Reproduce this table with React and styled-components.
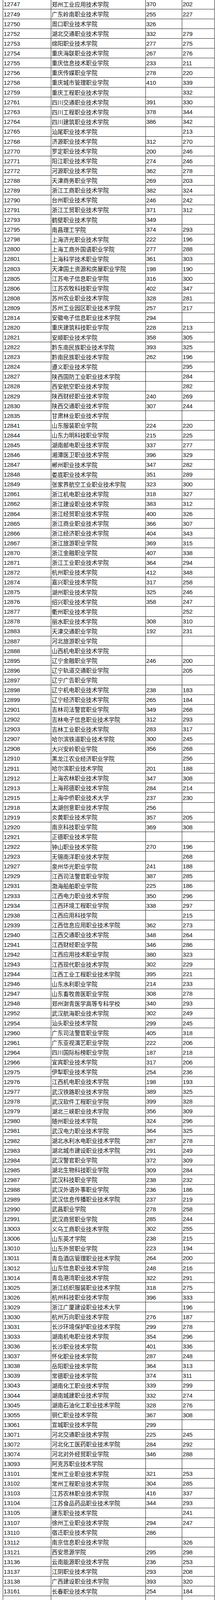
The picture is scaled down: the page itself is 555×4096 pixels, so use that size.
import styled, { createGlobalStyle } from "styled-components";

const GlobalStyle = createGlobalStyle`
  html, body {
    margin: 0;
    padding: 0;
    background: #fff;
  }
  body {
    font-family: "Liberation Sans", "Noto Sans CJK SC", sans-serif;
    color: #111;
  }
`;

// code | name | first score | second score  ('' = empty cell)
const rows = `
12747|郑州工业应用技术学院|370|202
12749|广东岭南职业技术学院|255|227
12750|周口职业技术学院|326|
12752|湖北交通职业技术学院|332|279
12753|绵阳职业技术学院|277|275
12754|重庆海联职业技术学院|267|276
12755|重庆信息技术职业学院|233|211
12756|重庆传媒职业学院|278|220
12758|重庆城市管理职业学院|410|339
12759|重庆工程职业技术学院||332
12761|四川交通职业技术学院|391|330
12763|四川工程职业技术学院|378|344
12764|四川建筑职业技术学院|386|342
12765|汕尾职业技术学院||213
12768|济源职业技术学院|312|270
12770|罗定职业技术学院|200|246
12771|阳江职业技术学院|274|246
12772|河源职业技术学院|362|278
12788|天津商务职业学院|269|203
12789|浙江工商职业技术学院|382|324
12790|台州职业技术学院|246|242
12791|浙江工贸职业技术学院|371|312
12793|鹤壁职业技术学院|349|
12795|南昌理工学院|374|293
12798|上海济光职业技术学院|222|196
12800|上海工商外国语职业学院|277|288
12801|上海科学技术职业学院|361|303
12803|天津国土资源和房屋职业学院|198|190
12805|江苏电子信息职业学院|316|300
12806|江苏农牧科技职业学院|402|347
12808|苏州农业职业技术学院|328|281
12809|苏州工业园区职业技术学院|257|217
12814|安徽电子信息职业技术学院|294|
12820|重庆建筑科技职业学院|228|213
12821|安顺职业技术学院|358|305
12822|黔东南民族职业技术学院|393|325
12823|黔南民族职业技术学院|262|196
12824|遵义职业技术学院||295
12827|陕西国防工业职业技术学院||284
12828|西安航空职业技术学院||282
12829|陕西财经职业技术学院|240|269
12830|陕西交通职业技术学院|307|244
12835|甘肃林业职业技术学院||
12841|山东服装职业学院|224|220
12844|山东力明科技职业学院|215|225
12845|湖南邮电职业技术学院|337|277
12846|湘潭医卫职业技术学院|396|329
12847|郴州职业技术学院|347|282
12848|娄底职业技术学院|351|289
12849|张家界航空工业职业技术学院|323|300
12861|浙江机电职业技术学院|318|327
12862|浙江建设职业技术学院|383|312
12864|浙江经贸职业技术学院|400|326
12865|浙江商业职业技术学院|366|307
12866|浙江经济职业技术学院|404|343
12867|浙江旅游职业学院|369|315
12870|浙江金融职业学院|407|338
12871|浙江工业职业技术学院|364|294
12872|杭州职业技术学院|412|348
12874|嘉兴职业技术学院|317|258
12875|湖州职业技术学院|325|246
12876|绍兴职业技术学院|358|247
12877|衢州职业技术学院||252
12878|丽水职业技术学院|308|310
12883|天津交通职业学院|192|231
12887|河北旅游职业学院||
12888|山西机电职业技术学院||
12895|辽宁金融职业学院|246|200
12896|辽宁轨道交通职业学院||205
12897|辽宁广告职业学院||
12898|辽宁机电职业技术学院|238|183
12899|辽宁经济职业技术学院|265|184
12901|吉林司法警官职业学院|349|268
12902|吉林电子信息职业技术学院|312|293
12903|吉林工业职业技术学院|283|317
12907|哈尔滨铁道职业技术学院|300|245
12908|大兴安岭职业学院|356|268
12910|黑龙江农业经济职业学院||256
12911|哈尔滨职业技术学院|201|188
12912|上海农林职业技术学院|347|308
12913|上海邦德职业技术学院|284|214
12915|上海中侨职业技术大学|237|230
12918|太湖创意职业技术学院|256|
12919|炎黄职业技术学院|357|205
12920|南京科技职业学院|369|308
12921|正德职业技术学院||
12922|钟山职业技术学院|270|196
12923|无锡南洋职业技术学院||268
12927|泉州华光职业学院|241|188
12929|江西司法警官职业学院|387|285
12931|渤海船舶职业学院|225|186
12933|江西电力职业技术学院|350|296
12934|江西环境工程职业学院|338|297
12938|江西应用科技学院||215
12939|江西信息应用职业技术学院|362|273
12940|江西交通职业技术学院|348|264
12941|江西财经职业学院|346|286
12942|江西应用技术职业学院|380|323
12943|江西现代职业技术学院|302|229
12944|江西工业工程职业技术学院|395|221
12946|山东水利职业学院|214|233
12947|山东畜牧兽医职业学院|308|278
12948|郑州澍青医学高等专科学校|340|293
12952|武汉航海职业技术学院|302|249
12954|汕头职业技术学院|299|245
12960|广东司法警官职业学院|405|318
12961|广东亚视演艺职业学院|222|206
12964|四川国际标榜职业学院|187|218
12966|宜宾职业技术学院|317|206
12975|伊犁职业技术学院|254|236
12976|江西机电职业技术学院|198|193
12977|武汉铁路职业技术学院|389|325
12978|武汉软件工程职业学院|399|328
12979|湖北三峡职业技术学院|356|309
12980|随州职业技术学院|324|296
12981|武汉电力职业技术学院|364|325
12982|湖北水利水电职业技术学院|287|278
12983|湖北城市建设职业技术学院|291|249
12984|武汉警官职业学院|372|309
12985|湖北生物科技职业学院|309|284
12987|武汉科技职业学院|238|232
12988|武汉外语外事职业学院|236|186
12989|武汉信息传播职业技术学院|237|219
12990|武昌职业学院|278|258
12991|武汉商贸职业学院|285|244
13003|义乌工商职业技术学院|302|255
13006|山东英才学院|238|215
13010|山东外贸职业学院|223|194
13011|青岛酒店管理职业技术学院|264|200
13012|山东信息职业技术学院|248|216
13014|青岛港湾职业技术学院|322|291
13025|浙江纺织服装职业技术学院|318|275
13026|杭州科技职业技术学院|396|333
13029|浙江广厦建设职业技术大学||196
13030|杭州万向职业技术学院|276|187
13031|长沙环境保护职业技术学院|299|278
13033|湖南机电职业技术学院|354|296
13036|长沙职业技术学院|401|336
13037|怀化职业技术学院|287|248
13038|岳阳职业技术学院|364|313
13039|常德职业技术学院|374|311
13043|湖南化工职业技术学院|339|299
13044|湖南城建职业技术学院|332|274
13045|湖南石油化工职业技术学院|328|276
13055|铜仁职业技术学院|367|308
13061|宣城职业技术学院|299|
13071|河北交通职业技术学院|225|245
13072|河北化工医药职业技术学院|284|292
13074|河北对外经贸职业学院|346|288
13093|阿克苏职业技术学院||
13101|常州工业职业技术学院|321|253
13102|常州工程职业技术学院|304|285
13103|江苏农林职业技术学院|416|337
13104|江苏食品药品职业技术学院|344|293
13105|建东职业技术学院||241
13107|徐州工业职业技术学院|294|247
13110|宿迁职业技术学院|286|
13112|南京信息职业技术学院||326
13121|西安思源学院|295|298
13136|云南能源职业技术学院|236|253
13137|江阴职业技术学院|293|208
13138|广西建设职业技术学院|393|320
13161|长春职业技术学院|254|184
|||
`
  .trim()
  .split("\n")
  .map((line) => line.split("|"));

const Sheet = styled.div`
  width: 542px;
  margin: -1.4px 0 0 7.3px;
  border-left: 1px solid #1c1c1c;
  border-right: 1px solid #1c1c1c;
  box-sizing: border-box;
`;

const Row = styled.div`
  display: grid;
  grid-template-columns: 122px 241.6px 93.4px 1fr;
  height: 25.08px;
  box-sizing: border-box;
  border-bottom: 1px solid #1c1c1c;
`;

const Cell = styled.div`
  display: flex;
  align-items: center;
  box-sizing: border-box;
  padding: 1px 0 0 1px;
  border-left: ${(p) => (p.$first ? "none" : "1px solid #1c1c1c")};
  font-size: ${(p) => (p.$cjk ? "14.6px" : "15.4px")};
  font-family: ${(p) =>
    p.$cjk
      ? '"Noto Sans CJK SC", sans-serif'
      : '"Liberation Sans", "Noto Sans CJK SC", sans-serif'};
  letter-spacing: ${(p) => (p.$cjk ? "0" : "-0.2px")};
  white-space: nowrap;
  overflow: hidden;
  line-height: 1;
`;

export default function App() {
  return (
    <>
      <GlobalStyle />
      <Sheet>
        {rows.map(([code, name, a, b], i) => (
          <Row key={i}>
            <Cell $first>{code}</Cell>
            <Cell $cjk>{name}</Cell>
            <Cell>{a}</Cell>
            <Cell>{b}</Cell>
          </Row>
        ))}
      </Sheet>
    </>
  );
}
